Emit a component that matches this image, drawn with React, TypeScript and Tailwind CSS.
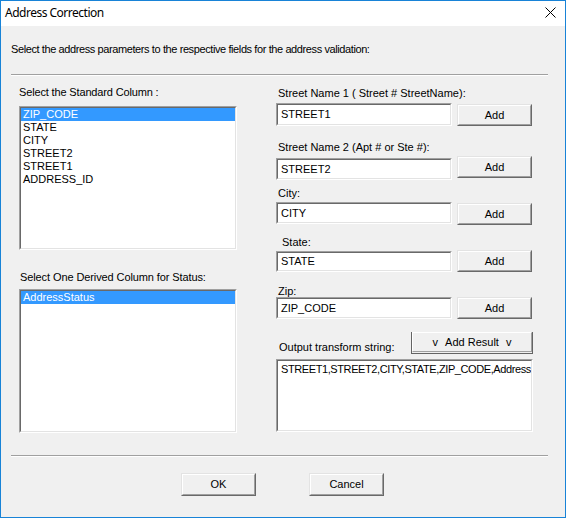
import React from "react";

function Sunken({ className = "", innerClassName = "", children }: { className?: string; innerClassName?: string; children?: React.ReactNode }) {
  return (
    <div className={"border border-[#a0a0a0] border-r-white border-b-white " + className}>
      <div className={"h-full w-full border border-[#696969] border-r-[#e3e3e3] border-b-[#e3e3e3] bg-white overflow-hidden " + innerClassName}>
        {children}
      </div>
    </div>
  );
}

function Button({ className = "", children }: { className?: string; children?: React.ReactNode }) {
  return (
    <div className={"border border-[#e3e3e3] border-r-[#696969] border-b-[#696969] bg-[#f0f0f0] " + className}>
      <div className="h-full w-full border border-white border-r-[#a0a0a0] border-b-[#a0a0a0] flex items-center justify-center text-black">
        {children}
      </div>
    </div>
  );
}

function Separator() {
  return <div className="h-[2px] border-t border-[#a0a0a0] border-b border-b-white" />;
}

function ListItem({ text, selected }: { text: string; selected?: boolean }) {
  return (
    <div className={"h-[13px] leading-[13px] pl-[2px] whitespace-nowrap " + (selected ? "bg-[#3399ff] text-white" : "text-black")}>
      {text}
    </div>
  );
}

function Field({ value, className = "" }: { value: string; className?: string }) {
  return (
    <Sunken className={"w-[176px] " + className} innerClassName="flex items-center pl-[3px] whitespace-nowrap">
      {value}
    </Sunken>
  );
}

export default function App() {
  return (
    <div className="w-[566px] h-[518px] border border-[#1883d7] bg-[#f0f0f0] flex flex-col overflow-hidden font-['Liberation_Sans',Arial,sans-serif] text-[11px] leading-[13px] text-black">
      {/* Title bar */}
      <div className="h-[25px] shrink-0 bg-white flex items-center justify-between pl-[4px] pr-[9px]">
        <span className="font-['Noto_Sans',sans-serif] text-[12px] leading-[16px] tracking-[-0.5px] text-black -mt-[2px]">Address Correction</span>
        <svg width="11" height="11" viewBox="0 0 11 11" className="-mt-[3px]">
          <path d="M0.5 0.5 L10.5 10.5 M10.5 0.5 L0.5 10.5" stroke="#000" strokeWidth="1" fill="none" />
        </svg>
      </div>

      {/* Body */}
      <div className="flex-1 flex flex-col pl-[10px] pr-[17px]">
        <div className="mt-[17px] h-[13px] whitespace-nowrap tracking-[-0.4px]">
          Select the address parameters to the respective fields for the address validation:
        </div>
        <div className="mt-[18px]">
          <Separator />
        </div>

        <div className="flex">
          {/* Left column */}
          <div className="ml-[8px] w-[218px] flex flex-col">
            <div className="mt-[10px] h-[13px] whitespace-nowrap tracking-[-0.15px]">Select the Standard Column :</div>
            <Sunken className="mt-[7px] h-[144px]">
              <ListItem text="ZIP_CODE" selected />
              <ListItem text="STATE" />
              <ListItem text="CITY" />
              <ListItem text="STREET2" />
              <ListItem text="STREET1" />
              <ListItem text="ADDRESS_ID" />
            </Sunken>
            <div className="mt-[21px] h-[13px] pl-[1px] whitespace-nowrap tracking-[-0.1px]">Select One Derived Column for Status:</div>
            <Sunken className="mt-[5px] h-[144px]">
              <ListItem text="AddressStatus" selected />
            </Sunken>
          </div>

          {/* Right column */}
          <div className="ml-[39px] w-[257px] flex flex-col">
            <div className="mt-[11px] h-[13px] pl-[2px] whitespace-nowrap">Street Name 1 ( Street # StreetName):</div>
            <div className="mt-[3px] flex items-start">
              <Field value="STREET1" className="h-[23px]" />
              <Button className="ml-[5px] mt-[1px] w-[75px] h-[22px]">Add</Button>
            </div>

            <div className="mt-[15px] h-[13px] pl-[2px] whitespace-nowrap">Street Name 2 (Apt # or Ste #):</div>
            <div className="mt-[2px] flex items-start">
              <Field value="STREET2" className="mt-[2px] h-[22px]" />
              <Button className="ml-[5px] w-[75px] h-[22px]">Add</Button>
            </div>

            <div className="mt-[7px] h-[13px] pl-[2px] whitespace-nowrap">City:</div>
            <div className="mt-[2px] flex items-start">
              <Field value="CITY" className="h-[22px]" />
              <Button className="ml-[5px] mt-[1px] w-[75px] h-[22px]">Add</Button>
            </div>

            <div className="mt-[11px] h-[13px] pl-[6px] whitespace-nowrap">State:</div>
            <div className="mt-[1px] flex items-start">
              <Field value="STATE" className="mt-[1px] h-[21px]" />
              <Button className="ml-[5px] w-[75px] h-[22px]">Add</Button>
            </div>

            <div className="mt-[13px] h-[13px] pl-[2px] whitespace-nowrap">Zip:</div>
            <div className="-mt-[1px] flex items-start">
              <Field value="ZIP_CODE" className="h-[22px]" />
              <Button className="ml-[5px] w-[75px] h-[22px]">Add</Button>
            </div>

            <div className="mt-[13px] h-[22px] flex items-end">
              <div className="h-[13px] pl-[3px] whitespace-nowrap">Output transform string:</div>
              <div className="ml-auto w-[122px] h-[22px] border border-[#646464] bg-[#f0f0f0]">
                <div className="h-full w-full border border-white border-r-[#a0a0a0] border-b-[#a0a0a0] flex items-center justify-center gap-[7px] -mt-px">
                  <span>v</span>
                  <span>Add Result</span>
                  <span>v</span>
                </div>
              </div>
            </div>

            <Sunken className="mt-[5px] h-[73px]" innerClassName="pl-[3px] pt-[2px] whitespace-nowrap tracking-[-0.4px]">
              STREET1,STREET2,CITY,STATE,ZIP_CODE,AddressStatus
            </Sunken>
          </div>
        </div>

        <div className="mt-[22px]">
          <Separator />
        </div>

        <div className="mt-[16px] flex pl-[170px] gap-[53px]">
          <Button className="w-[75px] h-[23px]">OK</Button>
          <Button className="w-[75px] h-[23px]">Cancel</Button>
        </div>
      </div>
    </div>
  );
}
